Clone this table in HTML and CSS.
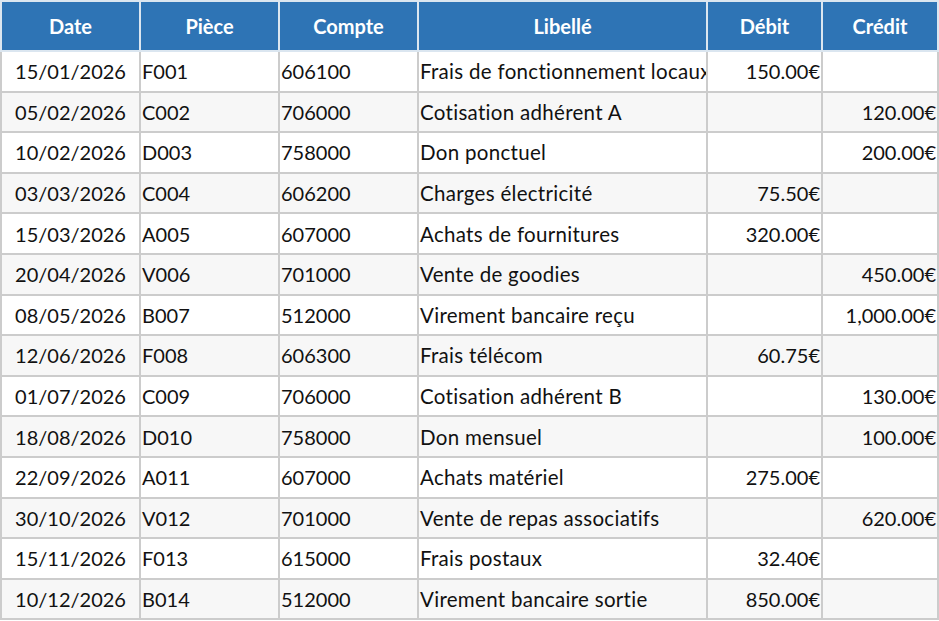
FILE: index.html
```html
<!DOCTYPE html>
<html lang="fr">
<head>
<meta charset="utf-8">
<link rel="stylesheet" href="styles.css">
</head>
<body>
<table class="ledger">
  <colgroup>
    <col class="c-date"><col class="c-piece"><col class="c-compte"><col class="c-lib"><col class="c-debit"><col class="c-credit">
  </colgroup>
  <thead>
    <tr><th>Date</th><th>Pièce</th><th>Compte</th><th>Libellé</th><th>Débit</th><th>Crédit</th></tr>
  </thead>
  <tbody>
    <tr><td class="date">15/01/2026</td><td>F001</td><td>606100</td><td class="lib">Frais de fonctionnement locaux</td><td class="num">150.00€</td><td class="num"></td></tr>
    <tr><td class="date">05/02/2026</td><td>C002</td><td>706000</td><td class="lib">Cotisation adhérent A</td><td class="num"></td><td class="num">120.00€</td></tr>
    <tr><td class="date">10/02/2026</td><td>D003</td><td>758000</td><td class="lib">Don ponctuel</td><td class="num"></td><td class="num">200.00€</td></tr>
    <tr><td class="date">03/03/2026</td><td>C004</td><td>606200</td><td class="lib">Charges électricité</td><td class="num">75.50€</td><td class="num"></td></tr>
    <tr><td class="date">15/03/2026</td><td>A005</td><td>607000</td><td class="lib">Achats de fournitures</td><td class="num">320.00€</td><td class="num"></td></tr>
    <tr><td class="date">20/04/2026</td><td>V006</td><td>701000</td><td class="lib">Vente de goodies</td><td class="num"></td><td class="num">450.00€</td></tr>
    <tr><td class="date">08/05/2026</td><td>B007</td><td>512000</td><td class="lib">Virement bancaire reçu</td><td class="num"></td><td class="num">1,000.00€</td></tr>
    <tr><td class="date">12/06/2026</td><td>F008</td><td>606300</td><td class="lib">Frais télécom</td><td class="num">60.75€</td><td class="num"></td></tr>
    <tr><td class="date">01/07/2026</td><td>C009</td><td>706000</td><td class="lib">Cotisation adhérent B</td><td class="num"></td><td class="num">130.00€</td></tr>
    <tr><td class="date">18/08/2026</td><td>D010</td><td>758000</td><td class="lib">Don mensuel</td><td class="num"></td><td class="num">100.00€</td></tr>
    <tr><td class="date">22/09/2026</td><td>A011</td><td>607000</td><td class="lib">Achats matériel</td><td class="num">275.00€</td><td class="num"></td></tr>
    <tr><td class="date">30/10/2026</td><td>V012</td><td>701000</td><td class="lib">Vente de repas associatifs</td><td class="num"></td><td class="num">620.00€</td></tr>
    <tr><td class="date">15/11/2026</td><td>F013</td><td>615000</td><td class="lib">Frais postaux</td><td class="num">32.40€</td><td class="num"></td></tr>
    <tr><td class="date">10/12/2026</td><td>B014</td><td>512000</td><td class="lib">Virement bancaire sortie</td><td class="num">850.00€</td><td class="num"></td></tr>
  </tbody>
</table>
</body>
</html>
```
FILE: styles.css
```css
html, body {
  margin: 0;
  padding: 0;
  background: #ffffff;
}
body {
  font-family: Lato, "Liberation Sans", sans-serif;
  color: #111;
}
.ledger {
  border-collapse: collapse;
  table-layout: fixed;
  width: 937px;
  font-size: 20px;
}
.c-date { width: 139px; }
.c-piece { width: 139px; }
.c-compte { width: 139px; }
.c-lib { width: 289px; }
.c-debit { width: 115px; }
.c-credit { width: 116px; }
.ledger th {
  background: #2e74b5;
  color: #fff;
  font-weight: bold;
  height: 48px;
  padding: 0;
  border: 2px solid #dbe6f0;
  text-align: center;
  font-size: 20px;
}
.ledger td {
  height: 38.6px;
  padding: 0 1px;
  border: 2px solid #cccccc;
  white-space: nowrap;
  overflow: hidden;
  text-align: left;
}
.ledger td.lib {
  font-size: 20.5px;
  letter-spacing: 0.3px;
}
.ledger tbody tr:nth-child(even) td {
  background: #f7f7f7;
}
.ledger td.date { text-align: center; }
.ledger td.num { text-align: right; }
```
